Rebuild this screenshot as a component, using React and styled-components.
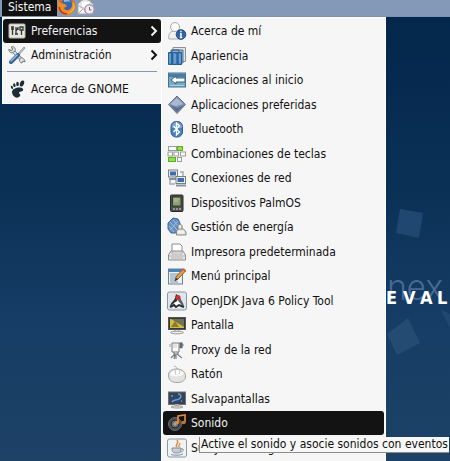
import React from "react";
import styled, { createGlobalStyle, css } from "styled-components";

const GlobalStyle = createGlobalStyle`
  * { box-sizing: border-box; }
  body { margin: 0; }
  body, button { font-family: "DejaVu Sans Condensed", "DejaVu Sans", sans-serif; font-size: 12px; }
`;

const Desktop = styled.main`
  position: relative;
  display: flex;
  flex-direction: column;
  height: 100vh;
  overflow: hidden;
  background: linear-gradient(#03264a 0%, #0b3056 40%, #163d66 70%, #1e4266 100%);
`;

const Wallpaper = styled.div`
  position: absolute;
  right: 0;
  top: 190px;
  width: 64px;
  height: 170px;
  overflow: hidden;
`;

const Squares = styled.svg`
  display: block;
  width: 64px;
  height: 170px;
`;

const GhostWord = styled.span`
  position: absolute;
  left: 1px;
  top: 76px;
  font: 300 36px/44px Roboto, sans-serif;
  white-space: nowrap;
  color: #486a93;
`;

const Caption = styled.span`
  position: absolute;
  left: 0;
  top: 96px;
  display: grid;
  grid-auto-flow: column;
  grid-auto-columns: 17px;
  font: bold 18px/24px "Liberation Sans Narrow", "DejaVu Sans Condensed", sans-serif;
  color: #fff;
`;

const Panel = styled.header`
  display: flex;
  align-items: flex-start;
  flex: none;
  height: 17px;
  padding-left: 2px;
  overflow: hidden;
  background: #8499b8;
  border-bottom: 1px solid #7d90ad;
`;

const PanelMenu = styled.button`
  height: 16px;
  padding: 0 5px 2px 6px;
  border: 0;
  background: #111;
  color: #f4f4f4;
  line-height: 14px;
`;

const Launcher = styled.button`
  display: block;
  height: 16px;
  padding: 0;
  border: 0;
  background: none;
`;

const Icon = styled.svg`
  display: block;
  flex: none;
  width: 20px;
  height: 20px;
`;

const PanelIcon = styled(Icon)`
  height: 16px;
`;

const Menus = styled.nav`
  position: relative;
  display: flex;
  align-items: flex-start;
  padding-left: 2px;
`;

const menuSurface = css`
  margin: 0;
  padding: 1px;
  list-style: none;
  background: #f6f6f6;
  border: 1px solid #fff;
`;

const MainMenu = styled.ul`
  ${menuSurface}
  min-width: 159px;
  padding: 1px 0 2px;
  border-right: 0;
`;

const SubMenu = styled.ul`
  ${menuSurface}
  display: grid;
  grid-auto-rows: 24px 25px;
  min-width: 225px;
`;

const Entry = styled.li`
  position: relative;
  display: flex;
`;

const MenuButton = styled.button`
  display: flex;
  align-items: center;
  gap: 4px;
  width: 100%;
  min-height: 24px;
  padding: 0 3px 0 4px;
  border: 0;
  border-radius: 3px;
  text-align: left;
  white-space: nowrap;
  line-height: 16px;
  background: ${(p) => (p.$active ? "#131313" : "transparent")};
  color: ${(p) => (p.$active ? "#f2f2f2" : "#111")};
`;

const Label = styled.span`
  flex: 1;
`;

const Chevron = styled.svg`
  width: 8px;
  height: 12px;
  fill: none;
  stroke: currentColor;
  stroke-width: 2;
`;

const Divider = styled.li`
  height: 1px;
  margin: 4px 4px 5px 4px;
  background: #8798b3;
`;

const Tooltip = styled.span`
  position: absolute;
  z-index: 2;
  left: 36px;
  top: 26px;
  padding: 0 1px;
  border: 1px solid #8d8d8d;
  border-width: 0 0 1px 1px;
  background: #f7f7f7;
  color: #111;
  line-height: 15px;
  white-space: nowrap;
`;

const art = {
  prefs: (
    <>
      <rect x="2" y="3" width="16" height="14" rx="1" fill="#e6e6e0" stroke="#b9b9b4" />
      <path d="M4 6h3M4 8h3M9 6v7M13 6h3v3h-3zM5.5 6v8M9 10l2-3M8 13h3M14.5 9v5M11 6v3" fill="none" stroke="#33352f" strokeWidth="1.3" />
    </>
  ),
  admin: (
    <>
      <path d="M4 4l10 10" stroke="#777c80" strokeWidth="3.4" />
      <path d="M4 4l11 11" stroke="#e1e5e6" strokeWidth="1.8" />
      <path d="M2 4l2 2 2-2-2-2c3-1 5 1 4 4L5 8C3 8 1.500 6 2 4zM13 13c2-1 5 1 5 4l-2-1-1 2c-2 0-3-2-2-5z" fill="#dfe3e4" stroke="#777c80" />
      <path d="M17 2l1 1-7 8-1-1z" fill="#cfd3d5" stroke="#74797d" strokeWidth=".7" />
      <path d="M11 10L4 17" stroke="#335f94" strokeWidth="4" strokeLinecap="round" />
      <path d="M10 10L4 16" stroke="#9abae0" strokeWidth="1.6" strokeLinecap="round" />
    </>
  ),
  gnome: (
    <g fill="#1d2c34">
      <ellipse cx="15" cy="4.500" rx="2" ry="3.200" transform="rotate(22 15 4.500)" />
      <ellipse cx="10.500" cy="5" rx="1.300" ry="2.200" />
      <ellipse cx="7.300" cy="6.300" rx="1.200" ry="1.900" transform="rotate(-12 7 6)" />
      <ellipse cx="4.800" cy="8.300" rx="1" ry="1.700" transform="rotate(-25 5 8)" />
      <path d="M5 13c0-4 9-6 11-3 1 3-4 2-4 4 0 1 2 1 1 3-3 4-8 0-8-4z" />
    </g>
  ),
  about: (
    <>
      <path d="M2 18c-1-5 1-8 6-8s8 3 7 8z" fill="#f1f1ef" stroke="#aaa" />
      <circle cx="8" cy="6" r="4.500" fill="#fafafa" stroke="#aaa" />
      <circle cx="14" cy="13.500" r="4.800" fill="#2f65a5" stroke="#1f4a82" />
      <path d="M14 12.500v4M13 12.800h1.500M12.800 16.500h2.500M13.300 10.500h1.400" stroke="#fff" strokeWidth="1.500" />
    </>
  ),
  appearance: (
    <>
      <path d="M6 1.500h12.500v14H6z" fill="#e4e6df" stroke="#8b9294" />
      <path d="M4 4h12v13H4z" fill="#91b3d3" stroke="#4a7294" />
      <path d="M1.500 6.500h13v12h-13z" fill="#4d89c2" stroke="#285e91" />
      <path d="M5 7v11M10.500 7v11" stroke="#2b629c" strokeWidth="2" />
      <path d="M3 8v9M8 8v9M13 8v9" stroke="#80b3dd" />
      <path d="M5 7V4h7v3" fill="none" stroke="#31648f" />
    </>
  ),
  startup: (
    <>
      <rect x="1.500" y="3" width="17" height="14" fill="#7aabc5" stroke="#4a748e" />
      <path d="M2 4h16v3H2z" fill="#457eaa" />
      <path d="M4 10l5-4v2h9v4H9v2z" fill="#fff" stroke="#32617e" />
      <path d="M3 15.500h14" stroke="#abd0dc" />
    </>
  ),
  preferred: (
    <>
      <path d="M10 1l8.500 8.500L10 18.500 1.500 9.500z" fill="#7c91b2" stroke="#6b7483" />
      <path d="M10 3l6 6-7 2-6-2z" fill="#a9b9d0" />
      <path d="M3 10l7 7 7-7-7 3z" fill="#566e94" />
    </>
  ),
  bluetooth: (
    <>
      <rect x="4" y="2.500" width="11.500" height="15.500" rx="5" fill="#4b82b7" stroke="#315d91" />
      <path d="M5 7c1-5 8-5 10 0v2H5z" fill="#79a7d1" />
      <path d="M6.500 7l6 6-3 3V4l3 3-6 6" fill="none" stroke="#fff" strokeWidth="1.300" />
    </>
  ),
  keys: (
    <g fill="#fafaf8" stroke="#999d96">
      <rect x="1.500" y="2.500" width="8" height="4" />
      <rect x="10.500" y="2.500" width="5" height="4" fill="#91de57" stroke="#62ac2c" />
      <rect x="1" y="8" width="4.500" height="4" />
      <rect x="7" y="8" width="4.500" height="4" />
      <rect x="13.500" y="8" width="5" height="4" />
      <rect x="1.500" y="13.500" width="7" height="4" fill="#8de34c" stroke="#5daf27" />
      <rect x="10.500" y="13.500" width="4" height="4" />
    </g>
  ),
  network: (
    <>
      <path d="M3 10v6h5M13 4h3v5" fill="none" stroke="#aaa" strokeWidth="1.500" />
      <rect x="1.500" y="2" width="9" height="7" fill="#eceeea" stroke="#777f89" />
      <rect x="3" y="3.500" width="6" height="4" fill="#3e6da9" />
      <path d="M2 11h8" stroke="#8a9099" strokeWidth="2" />
      <rect x="9" y="8.500" width="9.500" height="7" fill="#eceeea" stroke="#777f89" />
      <rect x="10.500" y="10" width="6.500" height="4" fill="#3e6da9" />
      <path d="M9 17.500h10" stroke="#8a9099" strokeWidth="2" />
    </>
  ),
  palm: (
    <>
      <rect x="3.500" y="2" width="12.500" height="16.500" rx="1" fill="#4c504c" stroke="#272b29" />
      <rect x="5.500" y="4" width="8.500" height="9" fill="#8da077" stroke="#303b2d" />
      <path d="M7 6h5M7 8h4" stroke="#b7c6a1" />
      <path d="M6 16h2M9 16h2M12 16h2" stroke="#a8ada6" strokeWidth="1.500" />
    </>
  ),
  power: (
    <>
      <path d="M1 6l3-3 2-2 5 1 2 4v7l-3 3H4l-3-4z" fill="#668fbd" stroke="#426a98" />
      <path d="M3 5l7 8M2 9l5 6M6 3l6 7M11 4l-8 9" stroke="#a4bfdb" />
      <path d="M11 12V9c0-2 4-2 4 0v3" fill="#eee" stroke="#777" />
      <path d="M9.500 18v-4l2-2h5l2.500 3v3z" fill="#e5e6e2" stroke="#858985" />
      <path d="M11 15h6" stroke="#fff" />
    </>
  ),
  printer: (
    <>
      <path d="M5 11V2h8l2 2v7z" fill="#fff" stroke="#8c8c8c" />
      <path d="M4 9h12l2.500 4v5h-17v-5z" fill="#eceae6" stroke="#8c8c8c" />
      <path d="M5 10h10v2H5z" fill="#fff" stroke="#aaa" />
      <path d="M2 14h16M4 16h12" stroke="#adb0ae" />
    </>
  ),
  menu: (
    <>
      <rect x="1.500" y="3" width="14" height="15" fill="#edf1f3" stroke="#71808b" />
      <path d="M2 3h13v3H2z" fill="#4d83bc" />
      <path d="M3 8h10M3 10h9M3 12h7M3 14h6M3 16h8" stroke="#7798b8" />
      <path d="M8 15l1-4 7-8 2.500 2-7.500 8z" fill="#e6a340" stroke="#8c582a" />
      <path d="M16 3l2.500 2" stroke="#d35151" strokeWidth="2" />
      <path d="M8 15l1-3 2 1z" fill="#292828" />
    </>
  ),
  openjdk: (
    <>
      <rect x=".5" y="1" width="19" height="18" rx="2" fill="#dfe5eb" stroke="#8798a9" />
      <path d="M9 3l3 2-2 5-4 3-3 2c1-4 4-5 5-8z" fill="#303234" />
      <path d="M13 5c0 4 3 5 4 10l-4-2-2-3z" fill="#5c6063" />
      <circle cx="11" cy="6.500" r="2.500" fill="#c93232" />
      <path d="M7 12l4-2 3 3-1 4H6z" fill="#fff" />
      <path d="M3 16l4-2 2 2 3-2 5 2" fill="none" stroke="#292d30" strokeWidth="2" />
    </>
  ),
  display: (
    <>
      <rect x="1.500" y="2.500" width="17" height="12" fill="#34383b" stroke="#555" />
      <path d="M3 4h14v9H3z" fill="#d4bd42" />
      <path d="M4 4h13v8z" fill="#727451" />
      <path d="M4 12l4-6 4 6z" fill="#887b2d" />
      <path d="M8 15v2M12 15v2" stroke="#999" />
      <ellipse cx="10" cy="17.500" rx="6.500" ry="1.300" fill="#eee" stroke="#999" />
    </>
  ),
  proxy: (
    <>
      <path d="M5 3h7v9H5z" fill="#fafafa" stroke="#777" />
      <path d="M12 3h3v4h-3M15 5h2M7 12v2h4v-2M8 14l-4 4M9 14v5M10 14l5 4M8 15l-1 4" fill="none" stroke="#7b8083" strokeWidth="1.200" />
      <path d="M13 3h2v5h-2zM3 4v3" stroke="#62686b" fill="#62686b" strokeWidth=".6" />
      <path d="M6 5h4M6 7h4" stroke="#ccc" />
    </>
  ),
  mouse: (
    <>
      <path d="M12 6c-3-1-2-4-5-4" fill="none" stroke="#aaa" />
      <path d="M1.500 12C1 7 5 5 10 5s9 3 8.500 8c-.5 4-4 5.500-8.500 5.500S2 17 1.500 12z" fill="#e3e3e0" stroke="#a1a1a0" />
      <path d="M3 11c1-4 5-5 8-5 2 0 4 1 6 4-4 3-10 3-14 1z" fill="#fafafa" />
      <path d="M9 5c-1 2-1 4 0 6M12 5c1 2 1 3 0 5" fill="none" stroke="#c1c1bf" />
    </>
  ),
  saver: (
    <>
      <rect x="1.500" y="3" width="17" height="12.500" fill="#3a4248" stroke="#6b7074" />
      <path d="M3 5h14v9H3z" fill="#2c456a" />
      <path d="M11 5c3 0 4 3 1 5s-5 0-7 3" fill="none" stroke="#7f9ac0" strokeWidth="1.500" />
      <path d="M4 7h2M14 12h1" stroke="#a7bad2" />
      <path d="M8 16h4" stroke="#aaa" strokeWidth="2" />
      <ellipse cx="10" cy="18" rx="6" ry="1" fill="#eee" stroke="#999" />
    </>
  ),
  sound: (
    <>
      <circle cx="8" cy="11" r="6.500" fill="#4a4d50" stroke="#686b6e" />
      <circle cx="8" cy="11" r="4" fill="#686b6c" stroke="#292b2d" />
      <circle cx="8" cy="11" r="1.700" fill="#a2a3a3" />
      <path d="M11 9V3l7-1v7" fill="none" stroke="#dd8a3e" strokeWidth="1.700" />
      <ellipse cx="10" cy="9.500" rx="2.200" ry="1.700" fill="#df8c40" />
      <ellipse cx="16.500" cy="9.500" rx="2.200" ry="1.700" fill="#c3732f" />
    </>
  ),
  java: (
    <>
      <rect x=".5" y="1" width="19" height="18" rx="2" fill="#f2f2f0" stroke="#8599b0" />
      <path d="M10 9c-3-3 3-3 0-7M12 9c-1-2 1-2 1-4" fill="none" stroke="#db843d" strokeWidth="1.300" />
      <path d="M5 10h9c0 4-1 5-4.500 5S5 14 5 10z" fill="#c8ced3" stroke="#7d8d9b" />
      <path d="M14 11h2c1 2-1 3-3 3M4 16.500c3 1 9 1 12-.5" fill="none" stroke="#7d8d9b" />
    </>
  ),
};

const items = [
  ["about", "Acerca de mí"],
  ["appearance", "Apariencia"],
  ["startup", "Aplicaciones al inicio"],
  ["preferred", "Aplicaciones preferidas"],
  ["bluetooth", "Bluetooth"],
  ["keys", "Combinaciones de teclas"],
  ["network", "Conexiones de red"],
  ["palm", "Dispositivos PalmOS"],
  ["power", "Gestión de energía"],
  ["printer", "Impresora predeterminada"],
  ["menu", "Menú principal"],
  ["openjdk", "OpenJDK Java 6 Policy Tool"],
  ["display", "Pantalla"],
  ["proxy", "Proxy de la red"],
  ["mouse", "Ratón"],
  ["saver", "Salvapantallas"],
  ["sound", "Sonido", "Active el sonido y asocie sonidos con eventos"],
  ["java", "Sun Java 6 Plugin Control Panel"],
];

function MenuItem({ icon, label, active, submenu, tip }) {
  return (
    <Entry>
      <MenuButton type="button" $active={active} aria-haspopup={submenu ? "menu" : undefined} aria-describedby={tip ? `tip-${icon}` : undefined}>
        <Icon viewBox="0 0 20 20" aria-hidden="true">{art[icon]}</Icon>
        <Label>{label}</Label>
        {submenu && (
          <Chevron viewBox="0 0 8 12" aria-hidden="true">
            <path d="M1.500 1.500L6 6l-4.500 4.500" />
          </Chevron>
        )}
      </MenuButton>
      {tip && <Tooltip role="tooltip" id={`tip-${icon}`}>{tip}</Tooltip>}
    </Entry>
  );
}

export default function App() {
  return (
    <>
      <GlobalStyle />
      <Desktop>
        <Wallpaper>
          <Squares viewBox="0 0 64 170" aria-hidden="true">
            <path d="M14 19l23 4-4 25-23-5z" fill="#20476f" />
            <path d="M1 144l21-16 12 25-23 12z" fill="#244b72" />
            <path d="M54 119l10 5v14z" fill="#20476f" />
          </Squares>
          <GhostWord>nex w</GhostWord>
          <Caption>
            <span>E</span>
            <span>V</span>
            <span>A</span>
            <span>L</span>
          </Caption>
        </Wallpaper>
        <Panel>
          <PanelMenu type="button" aria-haspopup="menu">Sistema</PanelMenu>
          <Launcher type="button" aria-label="Firefox">
            <PanelIcon viewBox="0 0 20 16" aria-hidden="true">
              <circle cx="9.500" cy="6" r="9" fill="#d96a1c" />
              <circle cx="10" cy="5" r="6" fill="#3568ae" />
              <path d="M7-1c4-1 6 1 6 3-3-1-4 0-6 0z" fill="#83b9e4" />
              <path d="M1 1l3 2 4 1 2 2-3 2c1 3 5 3 7 0 2-3 1-5 0-7 5 3 5 9 1 12-5 4-12 1-14-4z" fill="#f08a24" />
              <path d="M16 1c4 6 0 12-6 12 5-1 8-5 6-12z" fill="#f7d03b" />
              <path d="M2 7c1 4 4 7 8 7" fill="none" stroke="#b9391b" strokeWidth="1.500" />
            </PanelIcon>
          </Launcher>
          <Launcher type="button" aria-label="Correo">
            <PanelIcon viewBox="0 0 20 16" aria-hidden="true">
              <path d="M1 4l7-6 8 6v10H1z" fill="#f4f4f1" stroke="#aaa" />
              <path d="M4 1h9v5l-4 3-5-3z" fill="#fff" stroke="#bbb" strokeWidth=".6" />
              <path d="M1 5l7 5 7-5M1 14l5-5" fill="none" stroke="#aaa" />
              <circle cx="12.500" cy="9.500" r="4.700" fill="#f0edf2" stroke="#a594ad" strokeWidth="1.500" />
              <path d="M12.500 7v3h2" fill="none" stroke="#75567b" />
            </PanelIcon>
          </Launcher>
        </Panel>
        <Menus aria-label="Sistema">
          <MainMenu>
            <MenuItem icon="prefs" label="Preferencias" active submenu />
            <MenuItem icon="admin" label="Administración" submenu />
            <Divider role="separator" />
            <MenuItem icon="gnome" label="Acerca de GNOME" />
          </MainMenu>
          <SubMenu>
            {items.map(([icon, label, tip]) => (
              <MenuItem key={icon} icon={icon} label={label} tip={tip} active={Boolean(tip)} />
            ))}
          </SubMenu>
        </Menus>
      </Desktop>
    </>
  );
}
